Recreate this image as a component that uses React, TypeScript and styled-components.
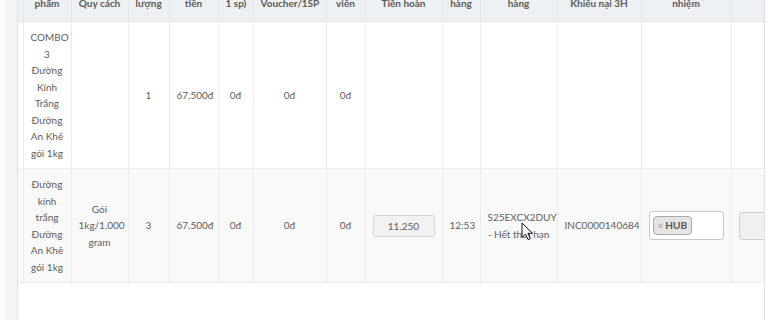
import styled, { createGlobalStyle } from "styled-components";

const GlobalStyle = createGlobalStyle`
  html, body {
    margin: 0;
    padding: 0;
    background: #fff;
  }
  body {
    font-family: Lato, "Noto Sans", sans-serif;
    overflow: hidden;
  }
`;

const Page = styled.div`
  display: flex;
  height: 320px;
  overflow: hidden;
  background: #fff;
`;

const SideEdge = styled.div`
  flex: none;
  width: 5px;
  background: #fafbfc;
`;

const Gutter = styled.div`
  flex: none;
  width: 12px;
  background: #f3f4f6;
`;

const Panel = styled.div`
  flex: none;
  width: 746px;
  background: #fff;
  border-left: 1px solid #dfe2e5;
  border-right: 1px solid #dfe2e5;
  overflow: hidden;
`;

/* page is scrolled down: the header's first line sits above the window */
const TableWrap = styled.div`
  margin-top: -30px;
`;

const Table = styled.table`
  border-collapse: collapse;
  table-layout: fixed;
  width: 833px;
  font-size: 10px;
  line-height: 16.5px;
`;

const HeadCell = styled.th`
  background: #eef1f3;
  color: #5a5a5a;
  font-weight: 700;
  text-align: center;
  vertical-align: bottom;
  white-space: nowrap;
  padding: 8px 7px 10px;
  border-right: 1px solid #e6e9ec;
  border-bottom: 1px solid #e4e7ea;
  overflow: hidden;
`;

const Row = styled.tr<{ $striped?: boolean }>`
  background: ${(p) => (p.$striped ? "#f9f9f9" : "#fff")};
`;

const Cell = styled.td`
  position: relative;
  border: 1px solid #ececec;
  padding: 7px;
  text-align: center;
  vertical-align: middle;
  color: #606060;
  white-space: pre-line;
  overflow: visible;
`;

const EdgeCell = styled(Cell)`
  padding: 0;
  border-left: none;
`;

const AmountInput = styled.input`
  display: block;
  width: 100%;
  box-sizing: border-box;
  height: 22px;
  margin: 0;
  padding: 0;
  border: 1px solid #d6d6d6;
  border-radius: 2px;
  background: #f2f2f2;
  color: #606060;
  font: inherit;
  text-align: center;
  outline: none;
`;

const TagBox = styled.div`
  display: flex;
  align-items: center;
  box-sizing: border-box;
  height: 29px;
  padding: 0 3px;
  background: #fff;
  border: 1px solid #c8c8c8;
  border-radius: 3px;
`;

const Tag = styled.span`
  display: inline-flex;
  align-items: center;
  gap: 2px;
  box-sizing: border-box;
  height: 19px;
  padding: 0 4px 0 4px;
  background: #e4e4e4;
  border: 1px solid #aaa;
  border-radius: 4px;
  color: #555;
  font-weight: 700;
  font-size: 10px;
`;

const TagRemove = styled.span`
  color: #999;
  font-weight: 400;
  font-size: 10px;
`;

const DisabledSelect = styled.div`
  box-sizing: border-box;
  width: 100%;
  height: 28px;
  background: #f0f0f0;
  border: 1px solid #cfcfcf;
  border-radius: 3px;
`;

const Pointer = styled.svg`
  position: absolute;
  left: 40px;
  top: 53px;
  pointer-events: none;
`;

const columns = [5, 48, 57, 41, 49, 35, 73, 39, 77, 38, 77, 84, 90, 120];

const headers: [string, string][] = [
  ["", ""],
  ["Tên sản", "phẩm"],
  ["", "Quy cách"],
  ["Số", "lượng"],
  ["Thành", "tiền"],
  ["Giảm (", "1 sp)"],
  ["Giảm giá", "Voucher/1SP"],
  ["Nhân", "viên"],
  ["Số", "Tiền hoàn"],
  ["Giờ giao", "hàng"],
  ["Mã đơn", "hàng"],
  ["Mã", "Khiếu nại 3H"],
  ["Trách", "nhiệm"],
  ["", "Lý do"],
];

function CursorArrow() {
  return (
    <Pointer width="13" height="19" viewBox="0 0 13 19">
      <path
        d="M1 1 L1 15.5 L4.6 12.2 L7 17.6 L9.3 16.6 L6.9 11.3 L11.6 11.3 Z"
        fill="#fff"
        stroke="#111"
        strokeWidth="1"
        strokeLinejoin="round"
      />
    </Pointer>
  );
}

export default function App() {
  return (
    <>
      <GlobalStyle />
      <Page>
        <SideEdge />
        <Gutter />
        <Panel>
          <TableWrap>
            <Table>
              <colgroup>
                {columns.map((w, i) => (
                  <col key={i} style={{ width: w }} />
                ))}
              </colgroup>
              <thead>
                <tr>
                  {headers.map(([a, b], i) => (
                    <HeadCell key={i} style={i === 0 ? { padding: 0 } : undefined}>
                      {a}
                      <br />
                      {b}
                    </HeadCell>
                  ))}
                </tr>
              </thead>
              <tbody>
                <Row>
                  <EdgeCell />
                  <Cell>{"COMBO\n3\nĐường\nKính\nTrắng\nĐường\nAn Khê\ngói 1kg"}</Cell>
                  <Cell />
                  <Cell>1</Cell>
                  <Cell>67.500đ</Cell>
                  <Cell>0đ</Cell>
                  <Cell>0đ</Cell>
                  <Cell>0đ</Cell>
                  <Cell />
                  <Cell />
                  <Cell />
                  <Cell />
                  <Cell />
                  <Cell />
                </Row>
                <Row $striped>
                  <EdgeCell />
                  <Cell>{"Đường\nkính\ntrắng\nĐường\nAn Khê\ngói 1kg"}</Cell>
                  <Cell>{"Gói\n1kg/1.000\ngram"}</Cell>
                  <Cell>3</Cell>
                  <Cell>67.500đ</Cell>
                  <Cell>0đ</Cell>
                  <Cell>0đ</Cell>
                  <Cell>0đ</Cell>
                  <Cell>
                    <AmountInput readOnly value="11.250" />
                  </Cell>
                  <Cell>12:53</Cell>
                  <Cell>
                    {"S25EXCX2DUY\n- Hết thời hạn"}
                    <CursorArrow />
                  </Cell>
                  <Cell>INC0000140684</Cell>
                  <Cell>
                    <TagBox>
                      <Tag>
                        <TagRemove>×</TagRemove>HUB
                      </Tag>
                    </TagBox>
                  </Cell>
                  <Cell>
                    <DisabledSelect />
                  </Cell>
                </Row>
              </tbody>
            </Table>
          </TableWrap>
        </Panel>
      </Page>
    </>
  );
}
